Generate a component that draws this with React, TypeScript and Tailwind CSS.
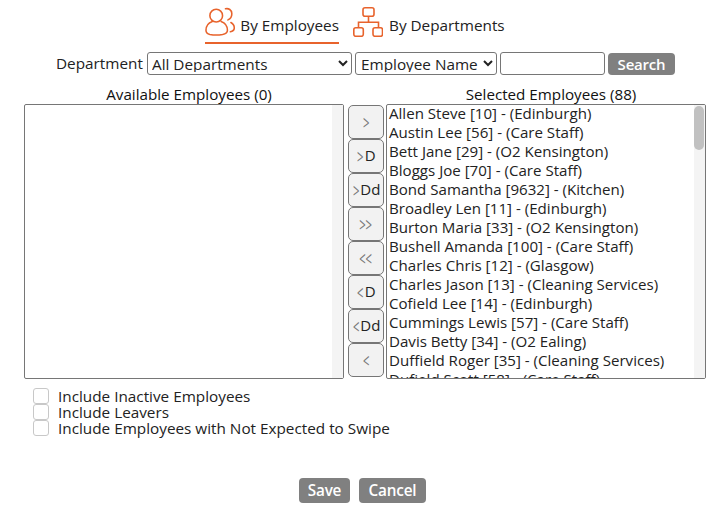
import { ReactNode } from 'react'

const selectedEmployees = [
  'Allen Steve [10] - (Edinburgh)',
  'Austin Lee [56] - (Care Staff)',
  'Bett Jane [29] - (O2 Kensington)',
  'Bloggs Joe [70] - (Care Staff)',
  'Bond Samantha [9632] - (Kitchen)',
  'Broadley Len [11] - (Edinburgh)',
  'Burton Maria [33] - (O2 Kensington)',
  'Bushell Amanda [100] - (Care Staff)',
  'Charles Chris [12] - (Glasgow)',
  'Charles Jason [13] - (Cleaning Services)',
  'Cofield Lee [14] - (Edinburgh)',
  'Cummings Lewis [57] - (Care Staff)',
  'Davis Betty [34] - (O2 Ealing)',
  'Duffield Roger [35] - (Cleaning Services)',
  'Dufield Scott [58] - (Care Staff)',
]

const moveButtons = [
  { arrow: '>', text: '' },
  { arrow: '>', text: 'D' },
  { arrow: '>', text: 'Dd' },
  { arrow: '>>', text: '' },
  { arrow: '<<', text: '' },
  { arrow: '<', text: 'D' },
  { arrow: '<', text: 'Dd' },
  { arrow: '<', text: '' },
]

const options = ['Include Inactive Employees', 'Include Leavers', 'Include Employees with Not Expected to Swipe']

const UsersIcon = () => (
  <svg width="31" height="30" viewBox="0 0 31 30" fill="none" stroke="#e8632c" strokeWidth="1.6" strokeLinecap="round">
    <circle cx="11.500" cy="8.500" r="6.500" />
    <path d="M7.500 14.500C3.500 16 1 19.500 1 23.500c0 2.500 1.500 3.800 4 4.300 4 .7 9 .7 13 0 2.500-.5 5-1.800 5-4.300 0-4-2.500-7.500-6.500-9" />
    <path d="M21 1.500c3-.8 6.500 1 6.500 5 0 3-1.500 5.300-4 6.300" />
    <path d="M26.500 15.500c2.500 1.300 3.500 3.500 3.500 5.500 0 2-1.500 3.500-4 4" />
  </svg>
)

const OrgIcon = () => (
  <svg width="30" height="30" viewBox="0 0 30 30" fill="none" stroke="#e8632c" strokeWidth="1.6">
    <rect x="10" y="0.800" width="11" height="8.500" rx="2" />
    <rect x="0.800" y="20.800" width="9.500" height="8.500" rx="2" />
    <rect x="20" y="20.800" width="9.500" height="8.500" rx="2" />
    <path d="M15.500 9.300v6M5.500 20.800v-5.500h20v5.500" />
  </svg>
)

const GreyButton = ({ children, width }: { children: ReactNode; width: string }) => (
  <button className={`h-[25px] rounded-[4px] bg-[#808080] text-[15.300px] font-semibold leading-none tracking-[-0.2px] text-white ${width}`}>
    {children}
  </button>
)

const App = () => {
  return (
    <div className="h-[513px] w-[722px] bg-white font-['Open_Sans',sans-serif] text-[15.300px] text-[#222]">
      <div className="flex h-[44px] items-start pl-[205px] pt-[7px]">
        <div className="flex h-[37px] w-[134px] items-start gap-[5px] border-b-2 border-[#e8632c]">
          <UsersIcon />
          <span className="mt-[8px] whitespace-nowrap leading-[20px]">By Employees</span>
        </div>
        <div className="ml-[14px] flex items-start gap-[6px]">
          <OrgIcon />
          <span className="mt-[8px] whitespace-nowrap leading-[20px]">By Departments</span>
        </div>
      </div>

      <div className="mt-[8px] flex h-[23px] items-center pl-[56px]">
        <span className="-mt-[1px] w-[91px] whitespace-nowrap leading-[20px]">Department</span>
        <select className="h-[23px] w-[205px] rounded-[3px] border border-[#767676] pb-[2px] text-[15.300px] leading-[18px]">
          <option>All Departments</option>
        </select>
        <select className="ml-[3px] h-[23px] w-[142px] rounded-[3px] border border-[#767676] pb-[2px] pl-[1px] text-[15.300px] leading-[18px]">
          <option>Employee Name</option>
        </select>
        <input className="ml-[3px] h-[23px] w-[105px] rounded-[3px] border border-[#767676]" />
        <button className="ml-[3px] mt-[1px] h-[22px] w-[67px] rounded-[4px] bg-[#808080] text-[15px] font-semibold leading-none tracking-[-0.2px] text-white">
          Search
        </button>
      </div>

      <div className="mt-[10px] flex pl-[29px] text-[15.200px] font-medium leading-[19px] text-[#111]">
        <div className="w-[320px] whitespace-nowrap text-center">Available Employees (0)</div>
        <div className="ml-[42px] w-[320px] whitespace-nowrap text-center">Selected Employees (88)</div>
      </div>

      <div className="flex pl-[24px]">
        <div className="flex h-[275px] w-[320px] justify-end rounded-[2px] border border-[#767676]">
          <div className="w-[11px] bg-[#f4f4f4]" />
        </div>
        <div className="ml-[4px] flex w-[36px] flex-col pt-[1px]">
          {moveButtons.map((btn) => (
            <button
              key={btn.arrow + btn.text}
              className="flex h-[34px] w-[36px] items-center justify-center rounded-[5px] border border-[#767676] bg-[#f2f2f2] text-[15px] leading-none"
            >
              <span className="inline-block scale-x-[0.75] scale-y-[1.3] whitespace-nowrap text-[#777]">{btn.arrow}</span>
              {btn.text && <span className="-mt-[2px] text-[#222]">{btn.text}</span>}
            </button>
          ))}
        </div>
        <div className="ml-[2px] flex h-[275px] w-[320px] overflow-hidden rounded-[2px] border border-[#767676]">
          <ul className="-mt-[1px] flex-1 overflow-hidden pl-[2px] text-[15.100px] leading-[19px] whitespace-nowrap">
            {selectedEmployees.map((name) => (
              <li key={name} className="h-[19px]">{name}</li>
            ))}
          </ul>
          <div className="w-[11px] shrink-0 bg-[#f4f4f4] pt-[1px]">
            <div className="h-[44px] w-[10px] rounded-[5px] bg-[#c1c1c1]" />
          </div>
        </div>
      </div>

      <div className="mt-[9px] flex flex-col pl-[33px]">
        {options.map((label) => (
          <label key={label} className="flex h-[16px] items-center">
            <span className="h-[16px] w-[16px] rounded-[3px] border border-[#c8c8c8] bg-white" />
            <span className="ml-[9px] whitespace-nowrap text-[15.300px] font-medium leading-[16px]">{label}</span>
          </label>
        ))}
      </div>

      <div className="mt-[42px] flex gap-[9px] pl-[299px]">
        <GreyButton width="w-[51px]">Save</GreyButton>
        <GreyButton width="w-[67px]">Cancel</GreyButton>
      </div>
    </div>
  )
}

export default App
